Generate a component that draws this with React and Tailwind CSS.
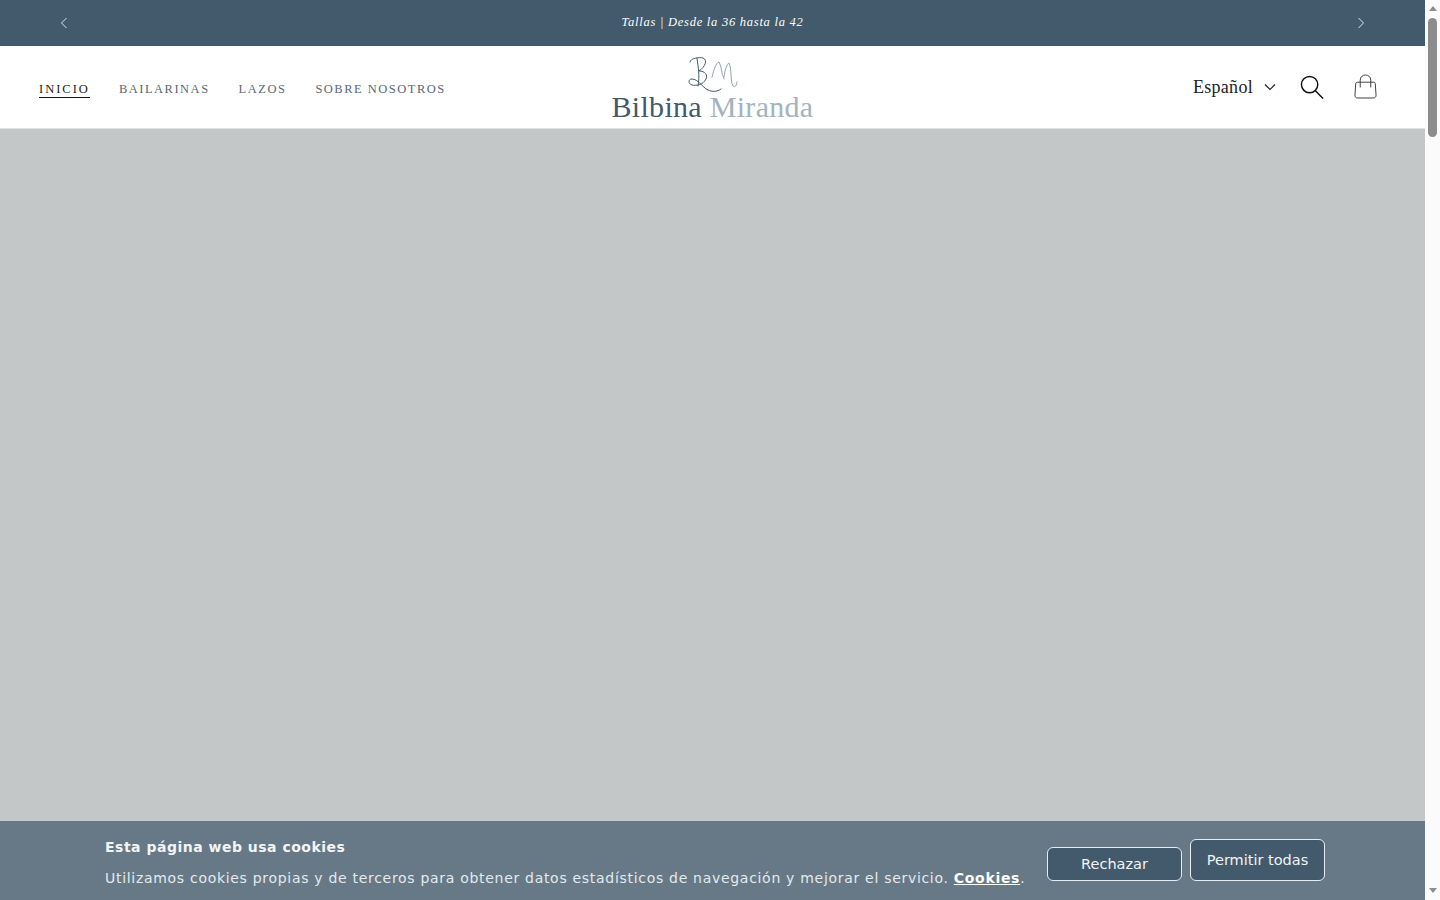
import React from "react";

const serif = "font-['Liberation_Serif',serif]";

function Bag() {
  return (
    <svg width="23" height="25" viewBox="0 0 24 26" fill="none" stroke="#3a3a3a" strokeWidth="1">
      <path d="M3.5 8.5 H20.5 C21.5 8.5 22 9 22.2 10 L23 22 C23 24 22 25 20 25 H4 C2 25 1 24 1 22 L1.8 10 C2 9 2.5 8.5 3.5 8.5 Z" />
      <path d="M6.5 14 V6.5 C6.5 3 9 1 12 1 C15 1 17.5 3 17.5 6.5 V14" />
    </svg>
  );
}

function Monogram() {
  return (
    <svg width="50" height="36" viewBox="0 0 50 36" fill="none" strokeLinecap="round">
      <g stroke="#425a6b" strokeWidth="1">
        <path d="M2 5 C2 1 12 0 15 1 C20 3 17 10 11 14 C17 14 20 18 18 22 C15 28 8 29 4 28 C0 27 0 22 4 22 C10 22 14 30 20 33 C24 35 29 35 33 32" />
        <path d="M9 1 C10 10 12 18 10 29" />
      </g>
      <g stroke="#8fa3af" strokeWidth="1">
        <path d="M24 20 C26 12 28 6 31 5 C34 10 33 16 36 22" />
        <path d="M36 20 C37 12 39 7 41 6 C44 12 42 24 45 29 C47 31 49 28 49 25" />
      </g>
    </svg>
  );
}

function Scrollbar() {
  return (
    <div className="w-[15px] shrink-0 bg-[#fbfbfb] flex flex-col items-center pt-[6px] pb-[7px]">
      <div className="w-0 h-0 border-x-[4.5px] border-x-transparent border-b-[5px] border-b-[#8c8c8c]" />
      <div className="w-[9px] h-[119px] bg-[#8c8c8c] rounded-[5px] mt-[7px] mb-auto" />
      <div className="w-0 h-0 border-x-[4.5px] border-x-transparent border-t-[5px] border-t-[#8c8c8c]" />
    </div>
  );
}

export default function App() {
  return (
    <div className="flex h-screen overflow-hidden bg-[#fbfbfb]">
      <div className="relative flex-1 flex flex-col min-w-0 bg-[#c3c7c8]">
        <div className="h-[46px] shrink-0 bg-[#425a6b] flex items-center justify-between px-[57px] text-white">
          <svg width="14" height="14" viewBox="0 0 14 14" fill="none" stroke="#dfe5e9" strokeWidth="1"><path d="M9.5 2 L4.5 7 L9.5 12" /></svg>
          <p className={`${serif} italic text-[12.5px] tracking-[0.75px] leading-none -mt-[1px]`}>Tallas | Desde la 36 hasta la 42</p>
          <svg width="14" height="14" viewBox="0 0 14 14" fill="none" stroke="#dfe5e9" strokeWidth="1"><path d="M4.5 2 L9.5 7 L4.5 12" /></svg>
        </div>

        <header className="h-[83px] shrink-0 bg-white border-b border-[#dfe2e3] grid grid-cols-[1fr_auto_1fr] items-center px-[39px]">
          <nav className={`${serif} flex gap-[29px] text-[12.5px] tracking-[1.5px] text-[#5a6873] pt-[5px]`}>
            <a className="text-[#222] border-b border-[#111] leading-[16px] tracking-[2px]">INICIO</a>
            <a className="leading-[17px]">BAILARINAS</a>
            <a className="leading-[17px]">LAZOS</a>
            <a className="leading-[17px]">SOBRE NOSOTROS</a>
          </nav>
          <div className="flex flex-col items-center w-[202px] pt-[3px]">
            <Monogram />
            <div className={`${serif} text-[30px] leading-[26px] tracking-[0.3px] whitespace-nowrap mt-[1px]`}>
              <span className="text-[#425a6b]">Bilbina </span><span className="text-[#a3b3bd]">Miranda</span>
            </div>
          </div>
          <div className="flex items-center justify-end pr-[9px]">
            <span className={`${serif} text-[18px] tracking-[0.3px] text-[#222]`}>Español</span>
            <svg className="ml-[11px]" width="12" height="8" viewBox="0 0 12 8" fill="none" stroke="#222" strokeWidth="1.2"><path d="M1 1.5 L6 6.5 L11 1.5" /></svg>
            <svg className="ml-[24px]" width="24" height="24" viewBox="0 0 25 25" fill="none" stroke="#111" strokeWidth="1.5"><circle cx="10" cy="10" r="8.5" /><path d="M16 16.5 L24 24.5" /></svg>
            <span className="ml-[30px] mb-[2px] flex"><Bag /></span>
          </div>
        </header>

        <main className="flex-1" />

        <div className="absolute inset-x-0 bottom-0 h-[79px] bg-[#677986] font-['DejaVu_Sans',sans-serif] flex items-start justify-between pl-[105px] pr-[100px] pt-[16px] pb-[19px]">
          <div className="text-[14px] leading-[20px] whitespace-nowrap">
            <p className="font-bold text-[#f2f5f6] mb-[11px] tracking-[0.5px]">Esta página web usa cookies</p>
            <p className="text-[#e3eaee] tracking-[0.7px]">Utilizamos cookies propias y de terceros para obtener datos estadísticos de navegación y mejorar el servicio. <a className="font-bold underline text-white">Cookies</a>.</p>
          </div>
          <div className="flex items-end gap-[8px] self-end text-[14.5px] text-[#f1f4f6]">
            <button className="w-[135px] h-[34px] rounded-[6px] bg-[#425a6b] border border-[#e6edf2] pt-[1px]">Rechazar</button>
            <button className="w-[135px] h-[42px] rounded-[6px] bg-[#425a6b] border border-[#e6edf2] pt-[1px]">Permitir todas</button>
          </div>
        </div>
      </div>
      <Scrollbar />
    </div>
  );
}
